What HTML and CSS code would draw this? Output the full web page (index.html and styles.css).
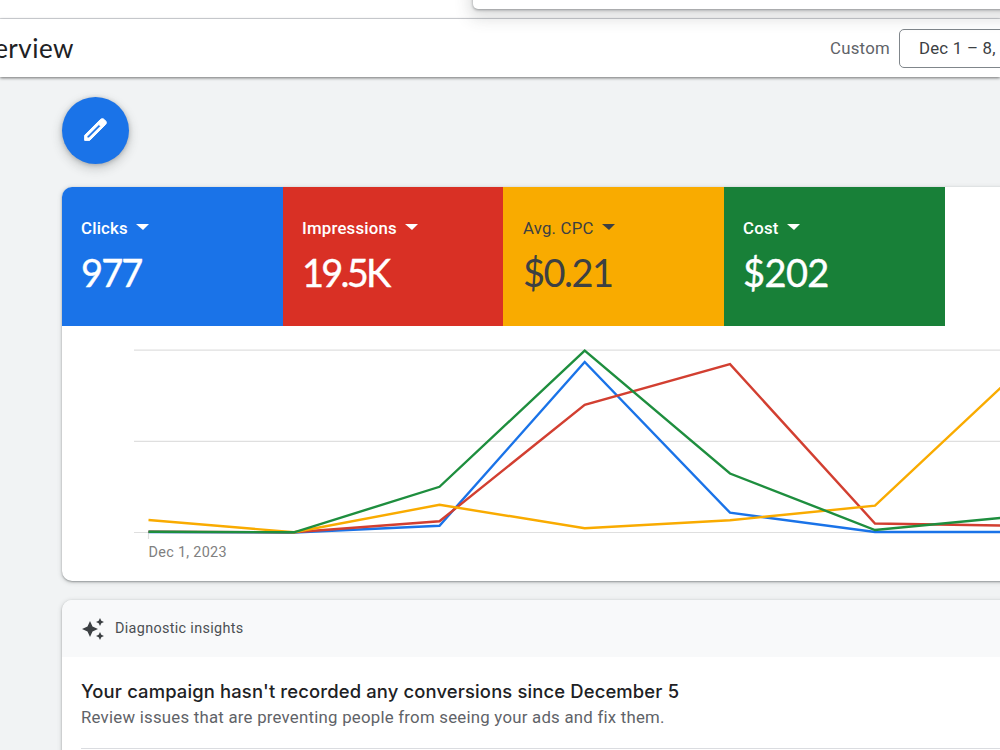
FILE: index.html
```
<!DOCTYPE html>
<html lang="en">
<head>
    <meta charset="UTF-8">
    <meta name="viewport" content="width=device-width, initial-scale=1.0">
    <title>Overview</title>
    <link rel="stylesheet" href="styles.css">
</head>
<body>
    <div class="topbar"></div>
    <div class="popup"></div>
    <header class="header">
        <h1><span>Overview</span></h1>
        <div class="date">
            <span class="date-type">Custom</span>
            <button class="date-range">Dec 1 – 8, 2023</button>
        </div>
    </header>

    <main>
        <button class="fab" aria-label="Edit">
            <svg width="29" height="29" viewBox="0 0 24 24"><path d="M20.41 4.94l-1.35-1.35c-.78-.78-2.05-.78-2.83 0L3 16.82V21h4.18L20.41 7.77c.79-.78.79-2.05 0-2.83zm-14 14.12L5 19v-1.36l9.82-9.82 1.41 1.41-9.82 9.83z"/></svg>
        </button>

        <section class="card scorecard">
            <div class="metrics">
                <div class="metric blue">
                    <div class="metric-name"><span>Clicks</span><i></i></div>
                    <div class="metric-value">977</div>
                </div>
                <div class="metric red">
                    <div class="metric-name"><span>Impressions</span><i></i></div>
                    <div class="metric-value">19.5K</div>
                </div>
                <div class="metric yellow">
                    <div class="metric-name"><span>Avg. CPC</span><i></i></div>
                    <div class="metric-value">$0.21</div>
                </div>
                <div class="metric green">
                    <div class="metric-name"><span>Cost</span><i></i></div>
                    <div class="metric-value">$202</div>
                </div>
            </div>
            <svg class="chart" width="1058" height="255" viewBox="62 326 1058 255">
                <g class="grid">
                    <path d="M134 350.2H1120M134 441.3H1120M134 532.5H1120M148.5 533V539"/>
                </g>
                <g class="lines">
                    <polyline class="line-blue" points="148.5,532 294,532.5 439.5,525.7 584.7,362 730,512.7 875,532 1020,532"/>
                    <polyline class="line-red" points="148.5,531.8 294,532.3 439.5,521.3 584.7,404.8 730,364.2 875,523.5 1020,525.8"/>
                    <polyline class="line-yellow" points="148.5,520 294,532.2 439.5,504.8 584.7,528.2 730,520.3 875,505.7 1020,369.5"/>
                    <polyline class="line-green" points="148.5,531.8 294,532.3 439.5,486.8 584.7,350.7 730,473.5 875,530 1020,516"/>
                </g>
                <text x="148.5" y="557">Dec 1, 2023</text>
            </svg>
        </section>

        <section class="card insights">
            <div class="insights-head">
                <svg width="22" height="23" viewBox="0 0 22 23"><path d="M8 4L10.5 9.5 16 12 10.5 14.5 8 20 5.5 14.5 0 12 5.5 9.5zM18 1L19.3 3.7 22 5 19.3 6.3 18 9 16.7 6.3 14 5 16.7 3.7zM18 15L19.3 17.7 22 19 19.3 20.3 18 23 16.7 20.3 14 19 16.7 17.7z"/></svg>
                <span>Diagnostic insights</span>
            </div>
            <div class="insights-body">
                <h2>Your campaign hasn't recorded any conversions since December 5</h2>
                <p>Review issues that are preventing people from seeing your ads and fix them.</p>
            </div>
        </section>
    </main>
</body>
</html>
```
FILE: styles.css
```
* {margin: 0; padding: 0; box-sizing: border-box;}
html, body {height: 100%; overflow: hidden;}
body {background-color: #f1f3f4; color: #3c4043; font-family: Roboto, sans-serif;}
button {font-family: inherit; cursor: pointer;}

.topbar {height: 19px; background-color: #fff; border-bottom: 1px solid #dadce0;}
/* bottom edge of the open search panel, hangs over the bars */
.popup {position: absolute; z-index: 2; top: -51px; left: 473px; width: 700px; height: 60px; background-color: #fff; border-radius: 5px; box-shadow: 0 1px 3px rgba(60, 64, 67, 0.5), 0 6px 16px 3px rgba(60, 64, 67, 0.18);}

.header {position: relative; height: 58px; background-color: #fff; display: flex; justify-content: space-between; align-items: center; box-shadow: 0 1px 3px rgba(0, 0, 0, 0.55);}
.header h1 {width: 74px; display: flex; justify-content: flex-end; overflow: hidden; font-family: Lato, sans-serif; font-size: 26px; line-height: 34px; font-weight: 400; letter-spacing: 0.5px; color: #202124;}
.date {width: 170px; display: flex; align-items: center; gap: 9px; flex: none; font-size: 16.8px; letter-spacing: 0.25px;}
.date-type {color: #5f6368;}
.date-range {width: 190px; height: 39px; padding-left: 19px; flex: none; background-color: #fff; border: 1px solid #80868b; border-radius: 5px; font-size: 16.8px; letter-spacing: 0.25px; color: #3c4043; text-align: left;}

main {padding: 20px 0 0 62px; display: flex; flex-direction: column; align-items: flex-start;}
.fab {width: 67px; height: 67px; margin-bottom: 23px; padding-bottom: 2px; border: none; border-radius: 50%; background-color: #1a73e8; display: flex; justify-content: center; align-items: center; box-shadow: 0 1px 4px rgba(60, 64, 67, 0.3), 0 4px 10px 2px rgba(60, 64, 67, 0.18);}
.fab svg {fill: #fff; stroke: #fff; stroke-width: 0.8;}

.card {width: 1058px; flex: none; background-color: #fff; border-radius: 10px; overflow: hidden; box-shadow: 0 1px 2px rgba(60, 64, 67, 0.45), 0 1px 4px 1px rgba(60, 64, 67, 0.15);}
.scorecard {height: 394px; margin-bottom: 19px;}

.metrics {display: flex; height: 139px;}
.metric {width: 221px; padding: 30px 19px 0; color: #fff;}
.metric-name {display: flex; align-items: center; gap: 8px; height: 22px; font-size: 16.8px; font-weight: 500; letter-spacing: 0.2px;}
.metric-name i {border: 6.5px solid transparent; border-top-color: currentColor; border-bottom: none; border-left-width: 7px; margin-top: -2px;}
.metric-value {margin-top: 9px; font-family: Lato, sans-serif; font-size: 38px; line-height: 48px;}
.metric.blue {background-color: #1a73e8;}
.metric.blue .metric-value {letter-spacing: -1.9px;}
.metric.red {width: 220px; background-color: #d93025;}
.metric.red .metric-value {letter-spacing: -2.8px;}
.metric.yellow {padding-left: 20px; background-color: #f9ab00; color: #3c4043;}
.metric.yellow .metric-name {font-weight: 400;}
.metric.yellow .metric-value {letter-spacing: -1.5px;}
.metric.green {background-color: #188038;}
.metric.green .metric-value {letter-spacing: -0.6px;}
.metric.blue .metric-value, .metric.red .metric-value, .metric.green .metric-value {-webkit-text-stroke: 0.4px #fff;}

.chart {display: block;}
.grid path {fill: none; stroke: #dfdfdf; stroke-width: 1.2;}
.lines polyline {fill: none; stroke-width: 2.4;}
.line-blue {stroke: #1a73e8;}
.line-red {stroke: #d23f31;}
.line-yellow {stroke: #f9ab00;}
.line-green {stroke: #1e8e3e;}
.chart text {fill: #808080; font-size: 14.4px; letter-spacing: 0.3px;}

.insights {height: 300px;}
.insights-head {height: 57px; padding-left: 20px; display: flex; align-items: center; gap: 11px; background-color: #f8f9fa; font-size: 14.4px; letter-spacing: 0.33px; color: #4b4f53;}
.insights-head svg {fill: #3c4043;}
.insights-body {margin: 0 19px; height: 92px; padding-top: 21px; border-bottom: 1px solid #dadce0;}
.insights-body h2 {font-family: Inter, sans-serif; font-size: 18.4px; line-height: 27px; font-weight: 500; letter-spacing: 0.15px; color: #202124;}
.insights-body p {font-size: 16.8px; line-height: 24px; color: #5f6368; letter-spacing: 0.24px;}
```
